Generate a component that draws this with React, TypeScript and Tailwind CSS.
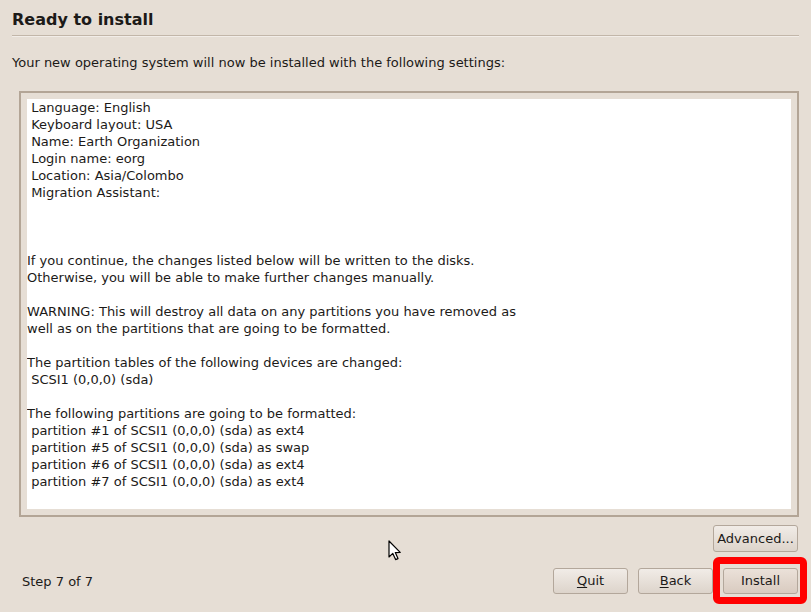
import React from "react";

const lines1 = [
  " Language: English",
  " Keyboard layout: USA",
  " Name: Earth Organization",
  " Login name: eorg",
  " Location: Asia/Colombo",
  " Migration Assistant:",
  "",
  "",
  "",
  "If you continue, the changes listed below will be written to the disks.",
  "Otherwise, you will be able to make further changes manually.",
  "",
  "WARNING: This will destroy all data on any partitions you have removed as",
  "well as on the partitions that are going to be formatted.",
  "",
  "The partition tables of the following devices are changed:",
  " SCSI1 (0,0,0) (sda)",
  "",
  "The following partitions are going to be formatted:",
  " partition #1 of SCSI1 (0,0,0) (sda) as ext4",
  " partition #5 of SCSI1 (0,0,0) (sda) as swap",
  " partition #6 of SCSI1 (0,0,0) (sda) as ext4",
  " partition #7 of SCSI1 (0,0,0) (sda) as ext4",
];

function Btn({ children, w, h, focus }: { children: React.ReactNode; w: string; h: string; focus?: boolean }) {
  return (
    <div
      className={`${w} ${h} flex items-center justify-center rounded-[3px] border border-[#b3a79b] text-[13px] text-[#1c1a18] ${
        focus
          ? "bg-gradient-to-b from-[#ebe1d9] to-[#d9cbc0]"
          : "bg-gradient-to-b from-[#f1ece7] to-[#ddd4cb]"
      }`}
    >
      {children}
    </div>
  );
}

export default function App() {
  return (
    <div
      className="relative w-[811px] h-[612px] bg-[#e6ded5] text-[#1c1a18] overflow-hidden flex flex-col"
      style={{ fontFamily: '"DejaVu Sans", Verdana, sans-serif' }}
    >
      <div className="pt-[9px] px-[12px]">
        <div className="text-[16px] leading-[22px] font-bold">Ready to install</div>
        <div className="mt-[4px] h-[1px] bg-[#c2b6a9]" />
        <div className="h-[1px] bg-[#f2ede8]" />
      </div>
      <div className="mt-[17px] px-[12px] text-[13px] leading-[17px]">
        Your new operating system will now be installed with the following settings:
      </div>
      <div className="mt-[20px] ml-[19px] w-[780px] h-[426px] border-2 border-[#b3a596] p-[6px]">
        <div className="w-full h-full bg-white text-[13px] leading-[17px] whitespace-pre overflow-hidden">
          {lines1.map((l, i) => (
            <div key={i} className="h-[17px]">
              {l}
            </div>
          ))}
        </div>
      </div>
      <div className="mt-[8px] flex justify-end pr-[13px]">
        <Btn w="w-[85px]" h="h-[27px]">Advanced...</Btn>
      </div>
      <div className="mt-[16px] flex items-center pl-[22px] pr-[13px]">
        <div className="text-[13px] leading-[17px]">Step 7 of 7</div>
        <div className="ml-auto flex gap-[10px]">
          <Btn w="w-[75px]" h="h-[26px]">
            <span>
              <span className="underline underline-offset-2">Q</span>uit
            </span>
          </Btn>
          <Btn w="w-[75px]" h="h-[26px]">
            <span>
              <span className="underline underline-offset-2">B</span>ack
            </span>
          </Btn>
          <div className="relative">
            <Btn w="w-[75px]" h="h-[26px]" focus>
              Install
            </Btn>
            <div className="absolute -left-[10px] -right-[9px] -top-[11px] -bottom-[10px] border-[7px] border-[#ff0000] rounded-[6px]" />
          </div>
        </div>
      </div>
      <svg
        className="absolute left-[388px] top-[540px]"
        width="14"
        height="22"
        viewBox="0 0 14 22"
      >
        <path
          d="M1 1 L1 17 L4.8 13.4 L7.6 19.6 L10 18.6 L7.3 12.6 L12.2 12.4 Z"
          fill="#ffffff"
          stroke="#000000"
          strokeWidth="1.2"
          strokeLinejoin="round"
        />
      </svg>
    </div>
  );
}
